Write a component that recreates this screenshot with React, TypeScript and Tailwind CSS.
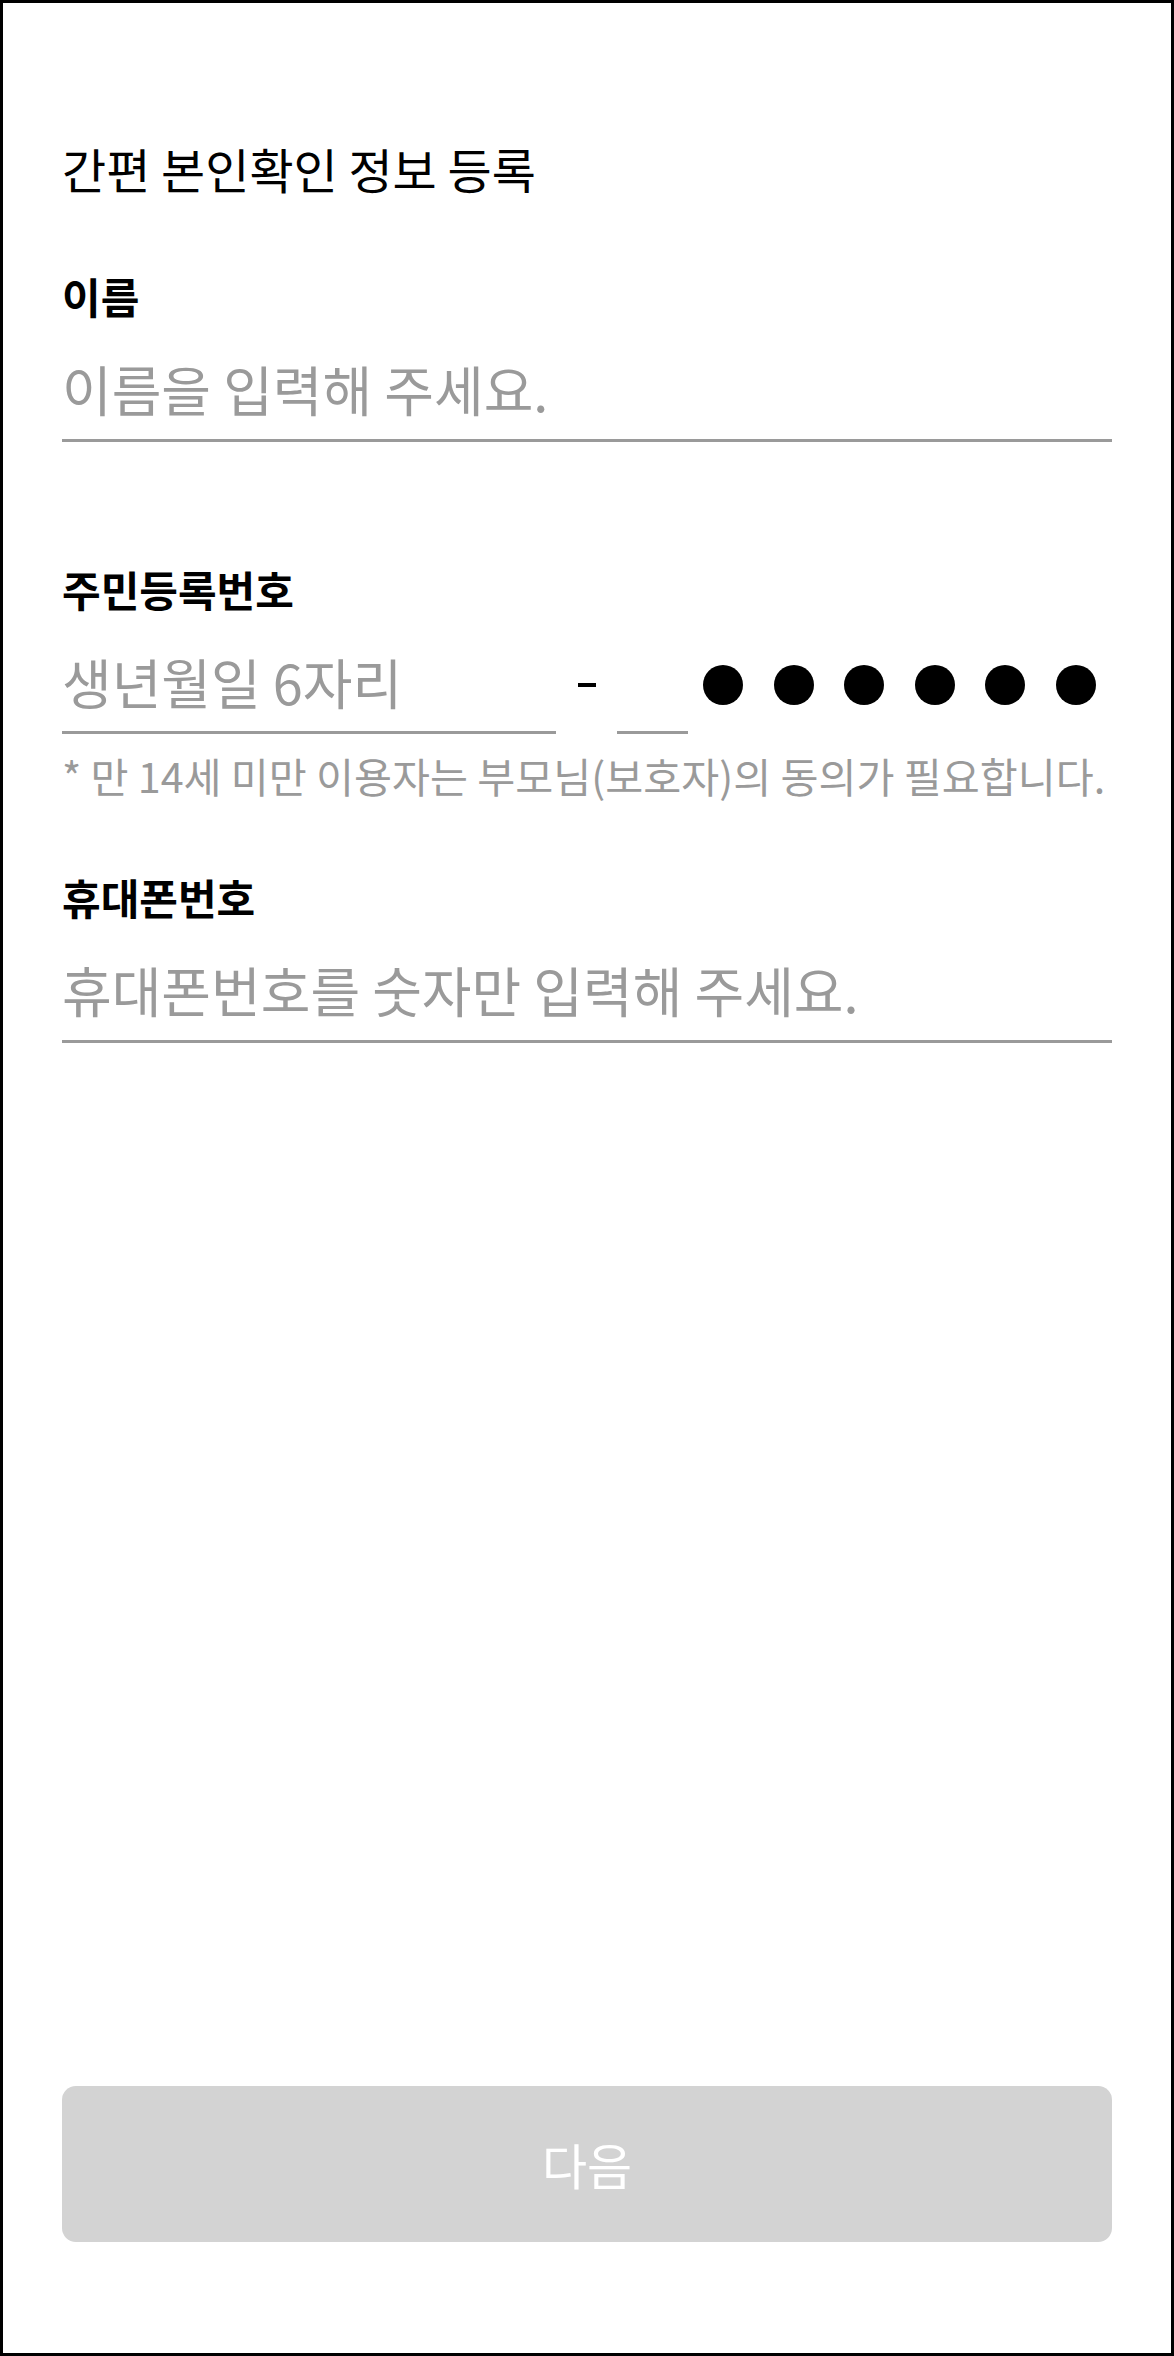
import React, { useState } from "react";

const font = "font-['Noto_Sans_CJK_KR','Noto_Sans',sans-serif]";

const inputBase =
  "block h-[80px] border-0 border-b-[3px] border-[#9a9a9a] bg-transparent outline-none text-[54px] text-black placeholder:text-[#9a9a9a] rounded-none";

const FieldLabel = ({ children }: { children: React.ReactNode }) => (
  <label className="block text-[42px] leading-[52px] font-bold text-black">{children}</label>
);

export default function App() {
  const [name, setName] = useState("");
  const [birth, setBirth] = useState("");
  const [gender, setGender] = useState("");
  const [phone, setPhone] = useState("");

  return (
    <div
      className={`${font} flex flex-col h-[2356px] w-full border-[3px] border-black bg-white px-[59px]`}
    >
      <h1 className="mt-[135px] text-[48px] leading-[60px] font-normal text-black">
        간편 본인확인 정보 등록
      </h1>

      <div className="mt-[72px]">
        <FieldLabel>이름</FieldLabel>
        <input
          className={`${inputBase} mt-[40px] w-full pb-[25px]`}
          placeholder="이름을 입력해 주세요."
          value={name}
          onChange={(e) => setName(e.target.value)}
        />
      </div>

      <div className="mt-[121px]">
        <FieldLabel>주민등록번호</FieldLabel>
        <div className="mt-[39px] flex items-start">
          <input
            className={`${inputBase} w-[494px] pb-[23px]`}
            placeholder="생년월일 6자리"
            maxLength={6}
            value={birth}
            onChange={(e) => setBirth(e.target.value)}
          />
          <div className="flex h-[80px] w-[61px] items-center justify-center pb-[19px]">
            <span className="block h-[4px] w-[18px] bg-black" />
          </div>
          <input
            className={`${inputBase} w-[71px] pb-[23px] text-center`}
            maxLength={1}
            value={gender}
            onChange={(e) => setGender(e.target.value)}
          />
          {/* masked remainder of the number */}
          <div className="ml-[15px] flex h-[80px] items-center gap-[30.5px] pb-[18px]">
            {[0, 1, 2, 3, 4, 5].map((i) => (
              <span key={i} className="block h-[40px] w-[40px] rounded-full bg-black" />
            ))}
          </div>
        </div>
        <p className="mt-[15px] text-[41.3px] leading-[52px] text-[#9a9a9a]">
          * 만 14세 미만 이용자는 부모님(보호자)의 동의가 필요합니다.
        </p>
      </div>

      <div className="mt-[70px]">
        <FieldLabel>휴대폰번호</FieldLabel>
        <input
          className={`${inputBase} mt-[40px] w-full pb-[25px]`}
          placeholder="휴대폰번호를 숫자만 입력해 주세요."
          inputMode="numeric"
          value={phone}
          onChange={(e) => setPhone(e.target.value)}
        />
      </div>

      <button
        type="button"
        disabled
        className="mt-auto mb-[111px] flex h-[156px] w-full items-center justify-center rounded-[14px] bg-[#d3d3d3] text-[49px] text-white"
      >
        다음
      </button>
    </div>
  );
}
